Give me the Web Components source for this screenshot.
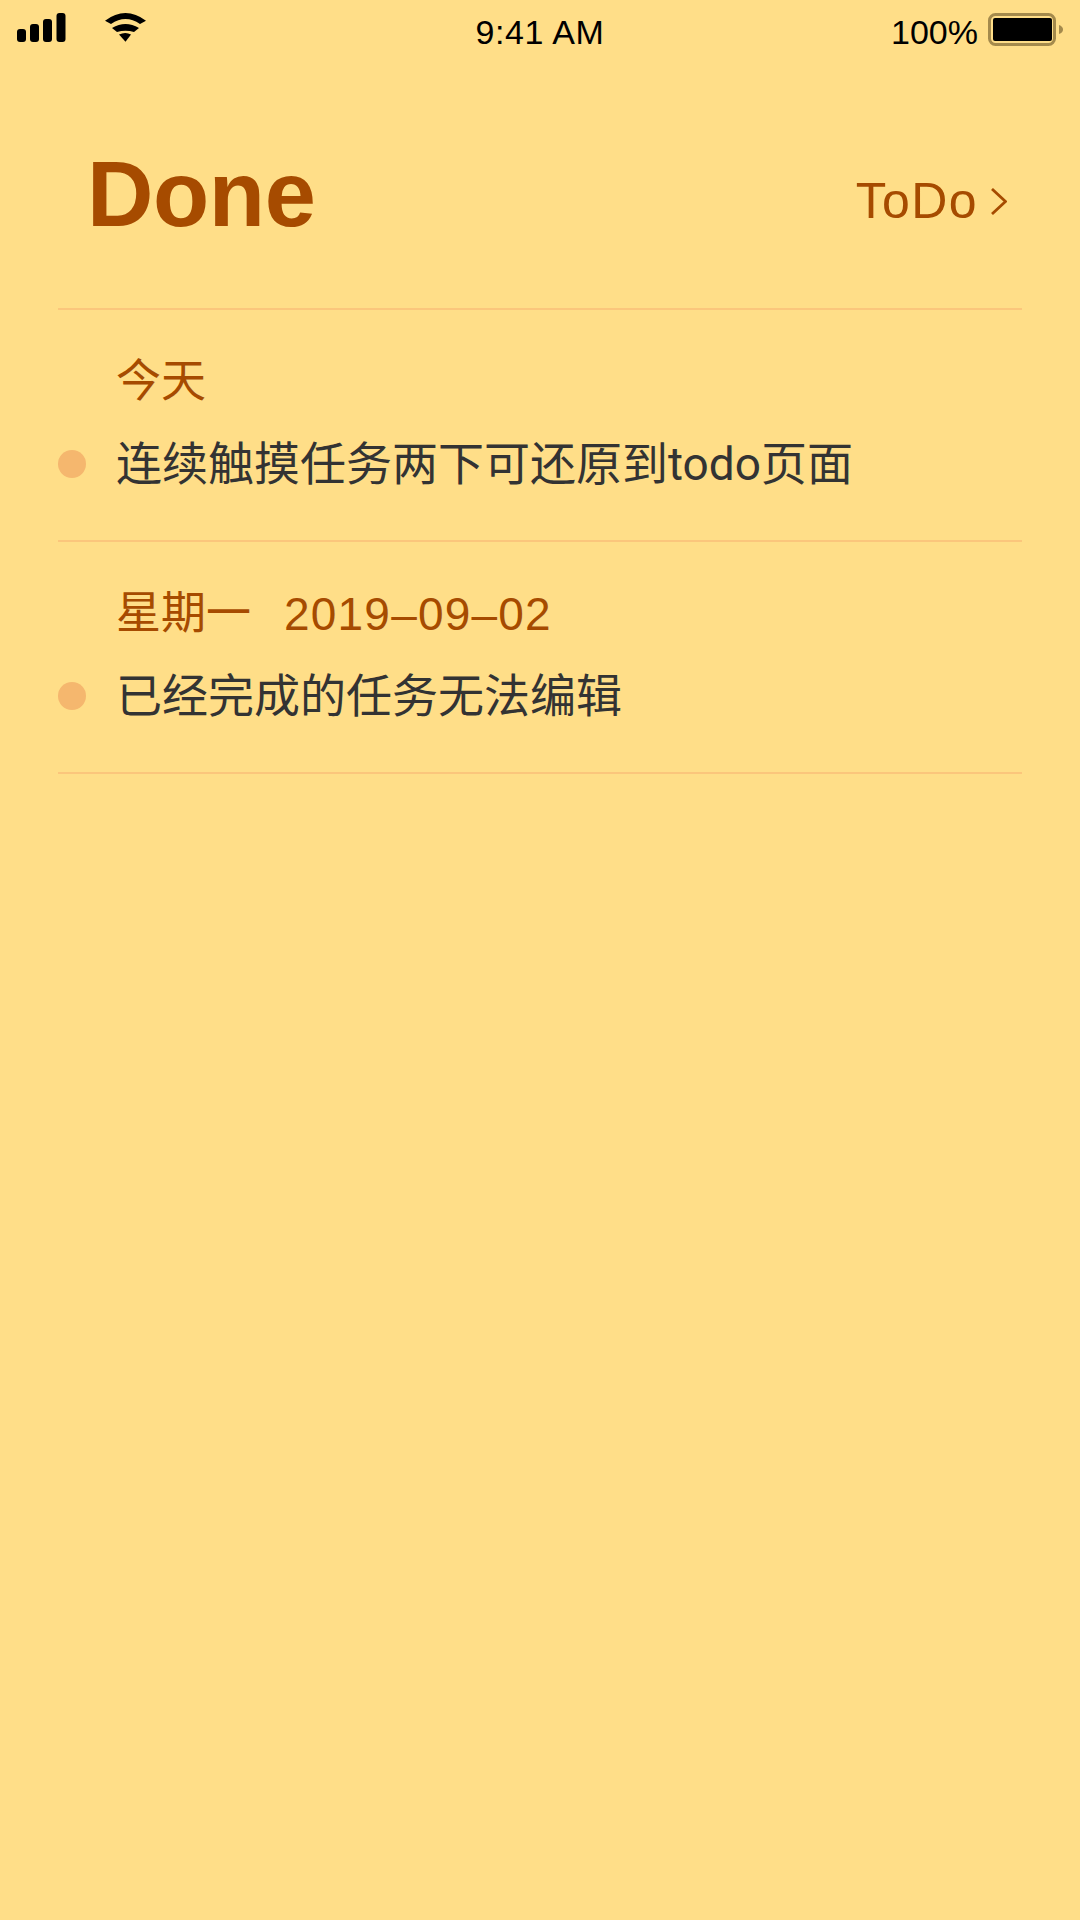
<!DOCTYPE html>
<html lang="zh">
<head>
<meta charset="utf-8">
<title>Done</title>
<style>
  html, body { margin: 0; height: 100%; background: #ffde88; }
  body { font-family: "Liberation Sans", "Noto Sans CJK SC", sans-serif; }
</style>
</head>
<body>
<done-page>
  <status-bar slot="status"></status-bar>
  <page-header slot="header" title="Done" link="ToDo"></page-header>
  <task-group label="今天">连续触摸任务两下可还原到todo页面</task-group>
  <task-group label="星期一" date="2019–09–02">已经完成的任务无法编辑</task-group>
</done-page>

<script>
class StatusBar extends HTMLElement {
  constructor() {
    super();
    this.attachShadow({ mode: 'open' });
    this.shadowRoot.innerHTML = `
      <style>
        :host {
          display: grid;
          grid-template-columns: 1fr auto 1fr;
          align-items: start;
          height: 60px;
          color: #000;
          font-size: 34px;
        }
        .left { display: flex; align-items: flex-start; padding-left: 17px; gap: 39px; }
        .left svg:first-child { margin-top: 13px; }
        .left svg:last-child { margin-top: 12px; }
        .time { padding-top: 13px; letter-spacing: 0.6px; }
        .right { display: flex; align-items: flex-start; justify-content: flex-end; padding-right: 16px; gap: 10px; }
        .right span { padding-top: 13px; }
        .right svg { margin-top: 13px; }
      </style>
      <div class="left">
        <svg width="49" height="30" viewBox="0 0 49 30">
          <rect x="0" y="16" width="9" height="13" rx="3"/>
          <rect x="13" y="11" width="9" height="18" rx="3"/>
          <rect x="26" y="6" width="9" height="23" rx="3"/>
          <rect x="39.500" y="0" width="9" height="29" rx="3"/>
        </svg>
        <svg width="41" height="32" viewBox="0 0 41 32">
          <path d="M0 8.700 Q20.500 -6.700 41 8.700 L35 12 Q20.500 2 6 12 Z"/>
          <path d="M7 16 Q20.500 8 34 16 L29 20 Q20.500 17.400 12 20 Z"/>
          <path d="M14 22.500 Q20.500 19.500 26 22.500 L20.500 29.700 Z"/>
        </svg>
      </div>
      <div class="time">9:41 AM</div>
      <div class="right">
        <span>100%</span>
        <svg width="76" height="33" viewBox="0 0 76 33">
          <rect x="1.500" y="1.500" width="65" height="30" rx="6" fill="none" stroke="#a48a4c" stroke-width="3"/>
          <rect x="5" y="5" width="59" height="23" rx="2"/>
          <path d="M71 12 Q75 13.500 75 16.500 Q75 19.500 71 21 Z" fill="#a48a4c"/>
        </svg>
      </div>
    `;
  }
}

class PageHeader extends HTMLElement {
  constructor() {
    super();
    this.attachShadow({ mode: 'open' });
    this.shadowRoot.innerHTML = `
      <style>
        :host {
          display: flex;
          align-items: center;
          justify-content: space-between;
          height: 250px;
          box-sizing: border-box;
          padding: 20px 15px 0 29px;
          border-bottom: 2px solid #fbc67c;
        }
        h1 { margin: 0; font-size: 92px; font-weight: 700; color: #a64b00; line-height: 1; letter-spacing: -0.4px; }
        .link { display: flex; align-items: center; gap: 13px; font-size: 50px; color: #a64b00; padding-top: 14px; letter-spacing: 1.4px; }
      </style>
      <h1>${this.getAttribute('title')}</h1>
      <div class="link">
        <span>${this.getAttribute('link')}</span>
        <svg width="16" height="27" viewBox="0 0 16 27">
          <path d="M1 1 L14.500 13.500 L1 26" fill="none" stroke="#a64b00" stroke-width="2.800"/>
        </svg>
      </div>
    `;
  }
}

class TaskGroup extends HTMLElement {
  constructor() {
    super();
    this.attachShadow({ mode: 'open' });
    const date = this.getAttribute('date');
    this.shadowRoot.innerHTML = `
      <style>
        :host {
          display: grid;
          grid-template-columns: 28px 1fr;
          column-gap: 30px;
          align-content: start;
          height: 232px;
          box-sizing: border-box;
          padding-top: 43px;
          border-bottom: 2px solid #fbc67c;
          font-size: 46px;
          line-height: 58px;
        }
        .label { grid-column: 2; color: #a64b00; display: flex; gap: 33px; }
        .label span:first-child { font-size: 45px; }
        .date { letter-spacing: 1.2px; }
        .dot { width: 28px; height: 28px; border-radius: 50%; background: #f5b76e; align-self: center; margin-top: 24px; }
        .text { color: #333; margin-top: 24px; font-family: Roboto, "Noto Sans CJK SC", sans-serif; }
      </style>
      <div class="label"><span>${this.getAttribute('label')}</span>${date ? `<span class="date">${date}</span>` : ''}</div>
      <div class="dot"></div>
      <div class="text"><slot></slot></div>
    `;
  }
}

class DonePage extends HTMLElement {
  constructor() {
    super();
    this.attachShadow({ mode: 'open' });
    this.shadowRoot.innerHTML = `
      <style>
        :host { display: block; height: 1920px; background: #ffde88; overflow: hidden; }
        .content { margin: 0 58px; }
      </style>
      <slot name="status"></slot>
      <div class="content">
        <slot name="header"></slot>
        <slot></slot>
      </div>
    `;
  }
}

customElements.define('status-bar', StatusBar);
customElements.define('page-header', PageHeader);
customElements.define('task-group', TaskGroup);
customElements.define('done-page', DonePage);
</script>
</body>
</html>
